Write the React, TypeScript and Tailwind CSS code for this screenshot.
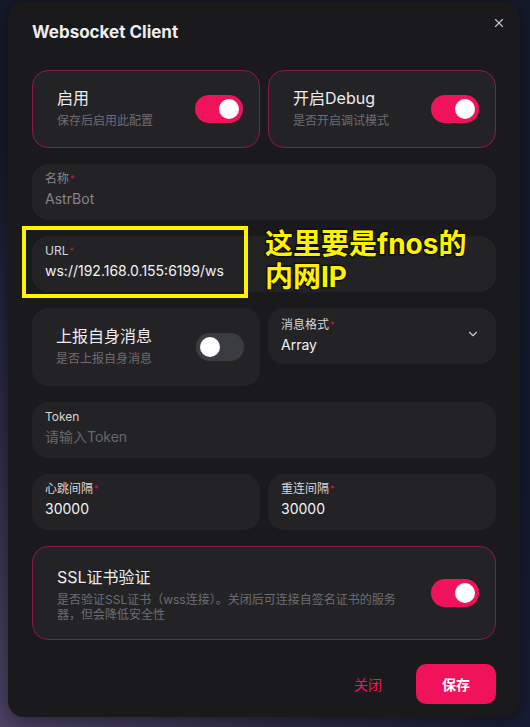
import { ChevronDown, X } from "lucide-react";

const font = "font-['Inter','Noto_Sans_CJK_SC',sans-serif]";

function Toggle({ on }: { on: boolean }) {
  return (
    <div
      className={`flex h-7 w-12 shrink-0 items-center rounded-full px-1 ${
        on ? "justify-end bg-[#f0135c]" : "justify-start bg-[#3b3b42]"
      }`}
    >
      <div className="h-5 w-5 rounded-full bg-white" />
    </div>
  );
}

function SwitchCard({
  title,
  hint,
  on,
  bordered = true,
}: {
  title: string;
  hint: string;
  on: boolean;
  bordered?: boolean;
}) {
  return (
    <div
      className={`flex h-[78px] items-center justify-between rounded-2xl bg-[#232326] pl-6 pr-4 ${
        bordered ? "border border-[#8a1b43]" : ""
      }`}
    >
      <div className="flex flex-col gap-[2px] pb-[2px]">
        <span className="text-[16px] leading-6 text-[#ececee]">{title}</span>
        <span className="text-[12px] leading-[18px] text-[#6c6c72]">{hint}</span>
      </div>
      <Toggle on={on} />
    </div>
  );
}

function Field({
  label,
  value,
  required,
  muted,
  placeholder,
  children,
}: {
  label: string;
  value?: string;
  required?: boolean;
  muted?: boolean;
  placeholder?: string;
  children?: React.ReactNode;
}) {
  return (
    <div className="relative flex h-14 flex-col gap-[2px] rounded-2xl bg-[#232326] px-[13px] pt-[7px]">
      <span className={`text-[12px] leading-4 ${muted ? "text-[#85858b]" : "text-[#d6d6da]"}`}>
        {label}
        {required ? <span className="ml-[1px] align-top text-[9px] text-[#c2185b]">*</span> : null}
      </span>
      {value ? (
        <span className={`text-[14px] leading-5 ${muted ? "text-[#85858b]" : "text-[#f2f2f4]"}`}>{value}</span>
      ) : (
        <span className="text-[14px] leading-5 text-[#66666c]">{placeholder}</span>
      )}
      {children}
    </div>
  );
}

export default function App() {
  return (
    <div
      className={`${font} h-[727px] w-[530px] overflow-hidden bg-[radial-gradient(circle_at_0%_100%,#4a4262_0%,#2a2840_35%,transparent_65%),linear-gradient(180deg,#141a2a,#111a2e)] pl-2 pt-[2px]`}
    >
      <div className="flex h-[715px] w-[512px] flex-col rounded-2xl bg-[#1a1a1d] px-6 shadow-[0_4px_16px_rgba(0,0,0,0.4)]">
        <div className="flex items-start justify-between pt-[18px]">
          <h1 className="text-[17px] font-bold leading-6 text-[#ededf0]">Websocket Client</h1>
          <X className="-mr-[10px] -mt-[4px] h-[14px] w-[14px] text-[#c4c4c8]" strokeWidth={2} />
        </div>

        <div className="mt-[26px] flex flex-col gap-4">
          <div className="grid grid-cols-2 gap-2">
            <SwitchCard title="启用" hint="保存后启用此配置" on />
            <SwitchCard title="开启Debug" hint="是否开启调试模式" on />
          </div>

          <Field label="名称" value="AstrBot" required muted />

          <Field label="URL" value="ws://192.168.0.155:6199/ws" required>
            <div className="absolute -left-[10px] -top-[10px] h-[72px] w-[226px] border-4 border-[#fff200]" />
            <div className="absolute left-[233px] -top-[8px] flex flex-col text-[28px] font-bold leading-[33px] text-[#fff200] [-webkit-text-stroke:3px_#111] [paint-order:stroke_fill]">
              <span>这里要是fnos的</span>
              <span>内网IP</span>
            </div>
          </Field>

          <div className="grid grid-cols-2 items-start gap-2">
            <SwitchCard title="上报自身消息" hint="是否上报自身消息" on={false} bordered={false} />
            <div className="flex h-14 items-center justify-between rounded-2xl bg-[#232326] pl-[13px] pr-4">
              <div className="flex flex-col gap-[2px]">
                <span className="text-[12px] leading-4 text-[#d6d6da]">
                  消息格式<span className="ml-[1px] align-top text-[9px] text-[#c2185b]">*</span>
                </span>
                <span className="text-[14px] leading-5 text-[#f2f2f4]">Array</span>
              </div>
              <ChevronDown className="mb-1 h-[14px] w-[14px] text-[#c8c8cc]" strokeWidth={2} />
            </div>
          </div>

          <Field label="Token" placeholder="请输入Token" />

          <div className="grid grid-cols-2 gap-2">
            <Field label="心跳间隔" value="30000" required />
            <Field label="重连间隔" value="30000" required />
          </div>

          <div className="flex h-[94px] items-center justify-between rounded-2xl border border-[#8a1b43] bg-[#232326] pl-6 pr-4">
            <div className="flex w-[354px] flex-col gap-[3px]">
              <span className="text-[16px] leading-6 text-[#ececee]">SSL证书验证</span>
              <span className="text-[12px] leading-[15px] text-[#6c6c72]">
                是否验证SSL证书（wss连接）。关闭后可连接自签名证书的服务器，但会降低安全性
              </span>
            </div>
            <Toggle on />
          </div>
        </div>

        <div className="mt-6 flex items-center justify-end gap-[34px]">
          <span className="text-[14px] text-[#e8185e]">关闭</span>
          <button className="h-10 w-20 rounded-[10px] bg-[#f0135c] text-[14px] font-bold text-white">保存</button>
        </div>
      </div>
    </div>
  );
}
